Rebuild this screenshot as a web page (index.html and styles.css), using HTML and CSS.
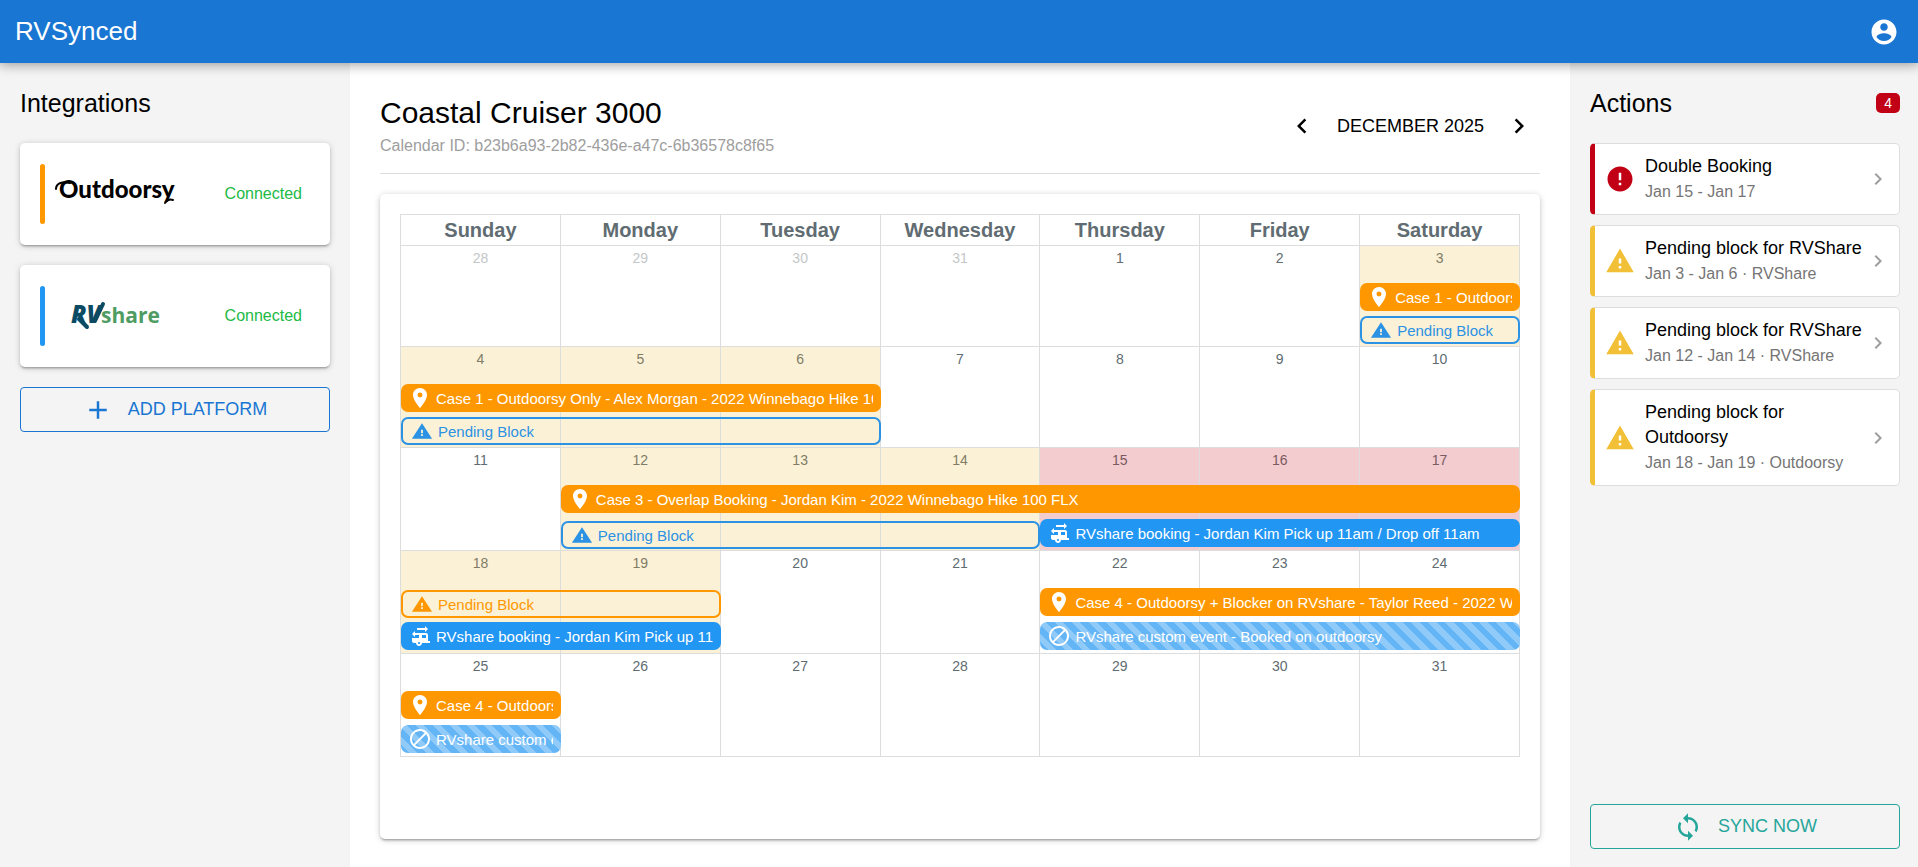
FILE: index.html
```
<!DOCTYPE html>
<html lang="en">
<head>
  <meta charset="UTF-8">
  <meta name="viewport" content="width=device-width, initial-scale=1.0">
  <title>RVSynced</title>
  <link rel="stylesheet" href="styles.css">
</head>
<body>
  <!-- shared icons -->
  <svg class="icon-defs" aria-hidden="true">
    <symbol id="pin" viewBox="0 0 24 24"><path d="M12 2C8.13 2 5 5.13 5 9c0 5.25 7 13 7 13s7-7.75 7-13c0-3.87-3.13-7-7-7zm0 9.500a2.500 2.500 0 0 1 0-5 2.500 2.500 0 0 1 0 5z"/></symbol>
    <symbol id="alert" viewBox="0 0 24 24"><path d="M1 20.500h22L12 3.500zm12-3h-2v-2h2zm0-3h-2v-4h2z"/></symbol>
    <symbol id="warning" viewBox="0 0 24 24"><path d="M1 21h22L12 2 1 21zm12-3h-2v-2h2v2zm0-4h-2v-4h2v4z"/></symbol>
    <symbol id="error" viewBox="0 0 24 24"><path d="M12 2C6.480 2 2 6.480 2 12s4.480 10 10 10 10-4.480 10-10S17.520 2 12 2zm1 15h-2v-2h2v2zm0-4h-2V7h2v6z"/></symbol>
    <symbol id="block" viewBox="0 0 24 24"><path d="M12 2C6.480 2 2 6.480 2 12s4.480 10 10 10 10-4.480 10-10S17.520 2 12 2zM4 12c0-4.420 3.580-8 8-8 1.850 0 3.550.63 4.900 1.690L5.690 16.900C4.630 15.550 4 13.850 4 12zm8 8c-1.850 0-3.550-.63-4.900-1.690L18.310 7.100C19.370 8.450 20 10.150 20 12c0 4.420-3.580 8-8 8z"/></symbol>
    <symbol id="trailer" viewBox="0 0 24 24"><path d="M20 17v-6c0-1.100-.9-2-2-2H7V7l-3 3 3 3v-2h4v3H4v3c0 1.100.9 2 2 2h2c0 1.660 1.340 3 3 3s3-1.340 3-3h8v-2h-2zm-9 3c-.55 0-1-.45-1-1s.45-1 1-1 1 .45 1 1-.45 1-1 1zm7-6h-4v-3h4v3zM17 2v2H9v2h8v2l3-3-3-3z"/></symbol>
    <symbol id="left" viewBox="0 0 24 24"><path d="M15.410 7.410L14 6l-6 6 6 6 1.410-1.410L10.830 12z"/></symbol>
    <symbol id="right" viewBox="0 0 24 24"><path d="M10 6L8.590 7.410 13.170 12l-4.580 4.590L10 18l6-6z"/></symbol>
    <symbol id="add" viewBox="0 0 24 24"><path d="M19 13h-6v6h-2v-6H5v-2h6V5h2v6h6v2z"/></symbol>
    <symbol id="sync" viewBox="0 0 24 24"><path d="M12 4V1L8 5l4 4V6c3.310 0 6 2.690 6 6 0 1.010-.25 1.970-.7 2.800l1.460 1.460C19.540 15.030 20 13.570 20 12c0-4.420-3.580-8-8-8zm0 14c-3.310 0-6-2.690-6-6 0-1.010.25-1.970.7-2.800L5.240 7.740C4.460 8.970 4 10.430 4 12c0 4.420 3.580 8 8 8v3l4-4-4-4v3z"/></symbol>
    <symbol id="account" viewBox="0 0 24 24"><path d="M12 2C6.480 2 2 6.480 2 12s4.480 10 10 10 10-4.480 10-10S17.520 2 12 2zm0 3c1.660 0 3 1.340 3 3s-1.340 3-3 3-3-1.340-3-3 1.340-3 3-3zm0 14.200c-2.500 0-4.710-1.280-6-3.220.03-1.990 4-3.080 6-3.080 1.990 0 5.970 1.090 6 3.080-1.290 1.940-3.500 3.220-6 3.220z"/></symbol>
  </svg>

  <header class="topbar">
    <div class="brand">RVSynced</div>
    <button class="icon-btn account" aria-label="Account"><svg class="icon lg"><use href="#account"/></svg></button>
  </header>

  <div class="layout">
    <aside class="sidebar left">
      <div class="sidebar-head">
        <h2>Integrations</h2>
      </div>
      <div class="platform">
        <span class="stripe orange"></span>
        <svg class="logo" viewBox="0 0 130 50" role="img" aria-label="Outdoorsy">
          <text class="logo-outdoorsy" x="6" y="29">Outdoorsy</text>
          <path class="swirl" d="M3 20C3 14 10 12 17 14M120 31c-3-1-6 0-8 3"/>
        </svg>
        <span class="status">Connected</span>
      </div>
      <div class="platform">
        <span class="stripe blue"></span>
        <svg class="logo" viewBox="0 0 130 50" role="img" aria-label="RVshare">
          <text class="logo-rv" x="18" y="32">RV</text>
          <path class="rv-leg" d="M26 28l8 8"/>
          <path class="rv-arm" d="M42 30l8-17"/>
          <text class="logo-share" x="48" y="32">share</text>
        </svg>
        <span class="status">Connected</span>
      </div>
      <button class="btn primary"><svg class="icon lg"><use href="#add"/></svg>ADD PLATFORM</button>
    </aside>

    <main class="main">
      <div class="main-head">
        <div>
          <h1>Coastal Cruiser 3000</h1>
          <p class="calendar-id">Calendar ID: b23b6a93-2b82-436e-a47c-6b36578c8f65</p>
        </div>
        <div class="month-nav">
          <button class="icon-btn" aria-label="Previous month"><svg class="icon lg"><use href="#left"/></svg></button>
          <span class="month">DECEMBER 2025</span>
          <button class="icon-btn" aria-label="Next month"><svg class="icon lg"><use href="#right"/></svg></button>
        </div>
      </div>

      <div class="card">
        <div class="calendar">
          <div class="weekdays">
            <div>Sunday</div>
            <div>Monday</div>
            <div>Tuesday</div>
            <div>Wednesday</div>
            <div>Thursday</div>
            <div>Friday</div>
            <div>Saturday</div>
          </div>

          <div class="week">
            <div class="day out">28</div>
            <div class="day out">29</div>
            <div class="day out">30</div>
            <div class="day out">31</div>
            <div class="day">1</div>
            <div class="day">2</div>
            <div class="day warn">3</div>
            <div class="event outdoorsy row-1 from-7 span-1"><svg class="icon"><use href="#pin"/></svg><span>Case 1 - Outdoorsy Only - Alex Morgan - 2022 Winnebago Hike 100 FLX</span></div>
            <div class="event pending blue row-2 from-7 span-1"><svg class="icon"><use href="#alert"/></svg><span>Pending Block</span></div>
          </div>

          <div class="week">
            <div class="day warn">4</div>
            <div class="day warn">5</div>
            <div class="day warn">6</div>
            <div class="day">7</div>
            <div class="day">8</div>
            <div class="day">9</div>
            <div class="day">10</div>
            <div class="event outdoorsy row-1 from-1 span-3"><svg class="icon"><use href="#pin"/></svg><span>Case 1 - Outdoorsy Only - Alex Morgan - 2022 Winnebago Hike 100 FLX</span></div>
            <div class="event pending blue row-2 from-1 span-3"><svg class="icon"><use href="#alert"/></svg><span>Pending Block</span></div>
          </div>

          <div class="week tall">
            <div class="day">11</div>
            <div class="day warn">12</div>
            <div class="day warn">13</div>
            <div class="day warn">14</div>
            <div class="day conflict">15</div>
            <div class="day conflict">16</div>
            <div class="day conflict">17</div>
            <div class="event outdoorsy row-1 from-2 span-6"><svg class="icon"><use href="#pin"/></svg><span>Case 3 - Overlap Booking - Jordan Kim - 2022 Winnebago Hike 100 FLX</span></div>
            <div class="event pending blue row-2 from-2 span-3"><svg class="icon"><use href="#alert"/></svg><span>Pending Block</span></div>
            <div class="event rvshare row-2 from-5 span-3"><svg class="icon"><use href="#trailer"/></svg><span>RVshare booking - Jordan Kim Pick up 11am / Drop off 11am</span></div>
          </div>

          <div class="week tall">
            <div class="day warn">18</div>
            <div class="day warn">19</div>
            <div class="day">20</div>
            <div class="day">21</div>
            <div class="day">22</div>
            <div class="day">23</div>
            <div class="day">24</div>
            <div class="event pending orange row-1 from-1 span-2"><svg class="icon"><use href="#alert"/></svg><span>Pending Block</span></div>
            <div class="event rvshare row-2 from-1 span-2"><svg class="icon"><use href="#trailer"/></svg><span>RVshare booking - Jordan Kim Pick up 11am / Drop off 11am</span></div>
            <div class="event outdoorsy row-1 from-5 span-3"><svg class="icon"><use href="#pin"/></svg><span>Case 4 - Outdoorsy + Blocker on RVshare - Taylor Reed - 2022 Winnebago Hike 100 FLX</span></div>
            <div class="event blocked row-2 from-5 span-3"><svg class="icon"><use href="#block"/></svg><span>RVshare custom event - Booked on outdoorsy</span></div>
          </div>

          <div class="week tall">
            <div class="day">25</div>
            <div class="day">26</div>
            <div class="day">27</div>
            <div class="day">28</div>
            <div class="day">29</div>
            <div class="day">30</div>
            <div class="day">31</div>
            <div class="event outdoorsy row-1 from-1 span-1"><svg class="icon"><use href="#pin"/></svg><span>Case 4 - Outdoorsy + Blocker on RVshare - Taylor Reed</span></div>
            <div class="event blocked row-2 from-1 span-1"><svg class="icon"><use href="#block"/></svg><span>RVshare custom event - Booked on outdoorsy</span></div>
          </div>
        </div>
      </div>
    </main>

    <aside class="sidebar right">
      <div class="sidebar-head">
        <h2>Actions</h2>
        <span class="badge">4</span>
      </div>
      <div class="actions">
        <a href="#" class="action conflict">
          <svg class="icon lg"><use href="#error"/></svg>
          <div class="action-text">
            <div class="action-title">Double Booking</div>
            <div class="action-dates">Jan 15 - Jan 17</div>
          </div>
          <svg class="icon chevron"><use href="#right"/></svg>
        </a>
        <a href="#" class="action">
          <svg class="icon lg"><use href="#warning"/></svg>
          <div class="action-text">
            <div class="action-title">Pending block for RVShare</div>
            <div class="action-dates">Jan 3 - Jan 6 · RVShare</div>
          </div>
          <svg class="icon chevron"><use href="#right"/></svg>
        </a>
        <a href="#" class="action">
          <svg class="icon lg"><use href="#warning"/></svg>
          <div class="action-text">
            <div class="action-title">Pending block for RVShare</div>
            <div class="action-dates">Jan 12 - Jan 14 · RVShare</div>
          </div>
          <svg class="icon chevron"><use href="#right"/></svg>
        </a>
        <a href="#" class="action">
          <svg class="icon lg"><use href="#warning"/></svg>
          <div class="action-text">
            <div class="action-title">Pending block for Outdoorsy</div>
            <div class="action-dates">Jan 18 - Jan 19 · Outdoorsy</div>
          </div>
          <svg class="icon chevron"><use href="#right"/></svg>
        </a>
      </div>
      <button class="btn sync"><svg class="icon lg"><use href="#sync"/></svg>SYNC NOW</button>
    </aside>
  </div>
</body>
</html>
```
FILE: styles.css
```
* {
  box-sizing: border-box;
}
body {
  font-family: "Liberation Sans", Arial, sans-serif;
  margin: 0;
  color: black;
  background-color: white;
  display: flex;
  flex-direction: column;
  min-height: 100vh;
}
h1,
h2,
p {
  margin: 0;
  font-weight: normal;
}
button {
  font-family: inherit;
  cursor: pointer;
}
.icon-defs {
  display: none;
}
.icon {
  width: 24px;
  height: 24px;
  fill: currentColor;
  flex-shrink: 0;
}
.icon.lg {
  width: 30px;
  height: 30px;
}
.icon-btn {
  display: flex;
  align-items: center;
  justify-content: center;
  width: 42px;
  height: 42px;
  padding: 0;
  border: none;
  background: none;
  color: inherit;
}

/* top bar */
.topbar {
  display: flex;
  align-items: center;
  justify-content: space-between;
  height: 63px;
  padding: 0 13px 0 15px;
  background-color: #1976d2;
  color: white;
  box-shadow: 0 0 12px 2px rgba(0, 0, 0, 0.2), 0 0 12px rgba(0, 0, 0, 0.24);
  z-index: 1;
}
.brand {
  font-size: 26px;
}

/* page columns */
.layout {
  display: flex;
  flex: 1;
}
.sidebar {
  display: flex;
  flex-direction: column;
  flex-shrink: 0;
  width: 350px;
  padding: 20px;
  background-color: #f4f4f4;
}
.sidebar.right {
  width: 348px;
  padding: 20px 18px 18px 20px;
}
.sidebar-head {
  display: flex;
  align-items: center;
  justify-content: space-between;
  height: 40px;
  margin-bottom: 20px;
}
.sidebar-head h2 {
  font-size: 25px;
}
.badge {
  padding: 0 8px;
  border-radius: 5px;
  background-color: #c10015;
  color: white;
  font-size: 14px;
  line-height: 20px;
}
.btn {
  display: flex;
  align-items: center;
  justify-content: center;
  gap: 15px;
  height: 45px;
  border: 1px solid currentColor;
  border-radius: 4px;
  background: none;
  font-size: 18px;
}
.btn.primary {
  color: #1976d2;
}
.btn.sync {
  margin-top: auto;
  color: #26a69a;
}

/* integrations */
.platform {
  display: flex;
  align-items: center;
  padding: 21px 28px 21px 20px;
  margin-bottom: 20px;
  border-radius: 5px;
  background-color: white;
  box-shadow: 0 1px 6px rgba(0, 0, 0, 0.2), 0 2px 2px rgba(0, 0, 0, 0.14), 0 3px 1px -2px rgba(0, 0, 0, 0.12);
}
.stripe {
  width: 5px;
  height: 60px;
  margin-right: 8px;
  border-radius: 3px;
}
.stripe.orange {
  background-color: #ff9800;
}
.stripe.blue {
  background-color: #2196f3;
}
.logo {
  width: 130px;
  height: 50px;
}
.logo-outdoorsy {
  font: 900 24px Lato, sans-serif;
}
.swirl {
  fill: none;
  stroke: black;
  stroke-width: 2;
  stroke-linecap: round;
}
.logo-rv {
  font: italic 800 24px "Open Sans", sans-serif;
  fill: #0b4a63;
}
.rv-leg,
.rv-arm {
  stroke: #0b4a63;
  stroke-width: 4;
  stroke-linecap: round;
}
.logo-share {
  font: bold 21px "Open Sans", sans-serif;
  fill: #4f9c63;
}
.status {
  margin-left: auto;
  color: #21ba45;
  font-size: 16px;
}

/* main */
.main {
  display: flex;
  flex-direction: column;
  flex: 1;
  min-width: 0;
  padding: 30px 30px 28px;
}
.main-head {
  display: flex;
  align-items: center;
  justify-content: space-between;
  padding-bottom: 14px;
  margin-bottom: 20px;
  border-bottom: 1px solid #ddd;
}
h1 {
  font-size: 30px;
  line-height: 40px;
}
.calendar-id {
  color: #9e9e9e;
  font-size: 16px;
  line-height: 26px;
}
.month-nav {
  display: flex;
  align-items: center;
  gap: 14px;
}
.month {
  font-size: 18px;
}
.card {
  flex: 1;
  padding: 20px;
  border-radius: 5px;
  box-shadow: 0 1px 6px rgba(0, 0, 0, 0.2), 0 2px 2px rgba(0, 0, 0, 0.14), 0 3px 1px -2px rgba(0, 0, 0, 0.12);
}

/* calendar */
.calendar {
  border-top: 1px solid #ddd;
  border-left: 1px solid #ddd;
}
.weekdays,
.week {
  display: grid;
  grid-template-columns: repeat(7, minmax(0, 1fr));
}
.weekdays div {
  border-right: 1px solid #ddd;
  border-bottom: 1px solid #ddd;
  color: #606c71;
  font-size: 20px;
  font-weight: bold;
  line-height: 30px;
  text-align: center;
}
.week {
  grid-template-rows: 37px 33px 31px;
}
.week.tall {
  grid-template-rows: 37px 34px 32px;
}
.day {
  grid-row: 1 / 4;
  padding-top: 3px;
  border-right: 1px solid #ddd;
  border-bottom: 1px solid #ddd;
  color: #606c71;
  font-size: 14px;
  line-height: 18px;
  text-align: center;
}
.day.out {
  color: #c4c7c9;
}
.day.warn {
  background-color: #fbf1d7;
  color: #807c66;
}
.day.conflict {
  background-color: #f3ccd0;
  color: #795a61;
}
.event {
  display: flex;
  align-items: center;
  gap: 4px;
  height: 28px;
  padding: 0 8px 0 7px;
  border-radius: 7px;
  color: white;
  font-size: 15px;
  white-space: nowrap;
}
.event span {
  overflow: hidden;
}
.event.outdoorsy {
  background-color: #ff9800;
}
.event.rvshare {
  background-color: #2196f3;
}
.event.blocked {
  background: repeating-linear-gradient(45deg, #64b5f6 0 6px, #90caf9 6px 12px);
}
.event.pending {
  gap: 5px;
  padding: 0 8px;
  border: 2px solid currentColor;
}
.week.tall .pending {
  margin-top: 2px;
}
.event.pending .icon {
  width: 22px;
  height: 22px;
}
.event.blue {
  color: #2b92e4;
}
.event.orange {
  color: #ff9800;
}

/* event placement: row in the week, first day, number of days */
.row-1 { grid-row: 2; }
.row-2 { grid-row: 3; }
.from-1 { grid-column-start: 1; }
.from-2 { grid-column-start: 2; }
.from-5 { grid-column-start: 5; }
.from-7 { grid-column-start: 7; }
.span-1 { grid-column-end: span 1; }
.span-2 { grid-column-end: span 2; }
.span-3 { grid-column-end: span 3; }
.span-6 { grid-column-end: span 6; }
.day:nth-child(1) { grid-column: 1; }
.day:nth-child(2) { grid-column: 2; }
.day:nth-child(3) { grid-column: 3; }
.day:nth-child(4) { grid-column: 4; }
.day:nth-child(5) { grid-column: 5; }
.day:nth-child(6) { grid-column: 6; }
.day:nth-child(7) { grid-column: 7; }

/* actions */
.actions {
  display: flex;
  flex-direction: column;
  gap: 10px;
}
.action {
  display: flex;
  align-items: center;
  padding: 10px 9px 10px 10px;
  border: 1px solid #ddd;
  border-left: 5px solid #f2c037;
  border-radius: 5px;
  background-color: white;
  color: #f2c037;
  text-decoration: none;
}
.action.conflict {
  border-left-color: #c10015;
  color: #c10015;
}
.action-text {
  flex: 1;
  margin-left: 10px;
  line-height: 25px;
}
.action-title {
  color: black;
  font-size: 18px;
}
.action-dates {
  color: #757575;
  font-size: 16px;
}
.chevron {
  color: #9e9e9e;
}
```
